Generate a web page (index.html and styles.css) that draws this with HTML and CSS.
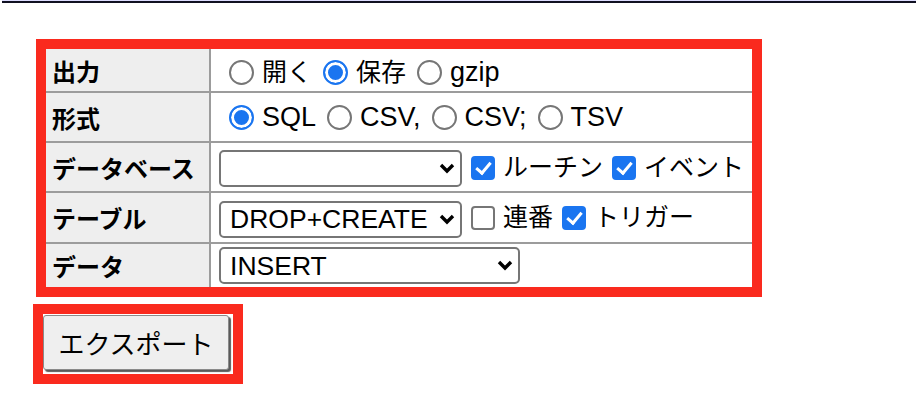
FILE: index.html
```html
<!DOCTYPE html>
<html lang="ja">
<head>
    <meta charset="UTF-8">
    <title>エクスポート</title>
    <link rel="stylesheet" href="styles.css">
</head>
<body>
    <div class="heading"></div>

    <form class="dump">
        <div class="mark">
            <table class="opts">
                <tr class="row1">
                    <th>出力</th>
                    <td>
                        <label><input type="radio" name="output" value="text">開く</label>
                        <label><input type="radio" name="output" value="file" checked>保存</label>
                        <label class="lat"><input type="radio" name="output" value="gz">gzip</label>
                    </td>
                </tr>
                <tr class="row2">
                    <th>形式</th>
                    <td>
                        <label class="lat"><input type="radio" name="format" value="sql" checked>SQL</label>
                        <label class="lat"><input type="radio" name="format" value="csv">CSV,</label>
                        <label class="lat"><input type="radio" name="format" value="csv;">CSV;</label>
                        <label class="lat"><input type="radio" name="format" value="tsv">TSV</label>
                    </td>
                </tr>
                <tr class="row3">
                    <th>データベース</th>
                    <td>
                        <span class="sel">
                            <select name="db_style">
                                <option></option>
                                <option>USE</option>
                                <option>DROP+CREATE</option>
                                <option>CREATE</option>
                            </select>
                            <svg class="chev" width="16" height="11" viewBox="0 0 16 11"><path d="M2 2 L8 8 L14 2" fill="none" stroke="#000" stroke-width="3.4"/></svg>
                        </span>
                        <label><input type="checkbox" name="routines" checked>ルーチン</label>
                        <label><input type="checkbox" name="events" checked>イベント</label>
                    </td>
                </tr>
                <tr class="row4">
                    <th>テーブル</th>
                    <td>
                        <span class="sel">
                            <select name="table_style">
                                <option></option>
                                <option>DROP+CREATE</option>
                                <option>CREATE</option>
                            </select>
                            <svg class="chev" width="16" height="11" viewBox="0 0 16 11"><path d="M2 2 L8 8 L14 2" fill="none" stroke="#000" stroke-width="3.4"/></svg>
                        </span>
                        <label><input type="checkbox" name="auto_increment">連番</label>
                        <label><input type="checkbox" name="triggers" checked>トリガー</label>
                    </td>
                </tr>
                <tr class="row5">
                    <th>データ</th>
                    <td>
                        <span class="sel">
                            <select name="data_style" class="long">
                                <option></option>
                                <option>TRUNCATE+INSERT</option>
                                <option>INSERT</option>
                                <option>INSERT+UPDATE</option>
                            </select>
                            <svg class="chev" width="16" height="11" viewBox="0 0 16 11"><path d="M2 2 L8 8 L14 2" fill="none" stroke="#000" stroke-width="3.4"/></svg>
                        </span>
                    </td>
                </tr>
            </table>
        </div>

        <div class="mark mark-btn">
            <button type="submit">エクスポート</button>
        </div>
    </form>

    <script>
        document.querySelector('select[name="table_style"]').selectedIndex = 1;
        document.querySelector('select[name="data_style"]').selectedIndex = 2;
    </script>
</body>
</html>
```

FILE: styles.css
```css
body {
    margin: 0;
    background: #fff;
    color: #000;
    font-family: "Liberation Sans", "Noto Sans CJK JP", sans-serif;
}
.heading {
    margin-left: 2px;
    height: 1px;
    background: #ddf;
    border-bottom: 2px solid #111122;
}
.dump {
    padding: 36px 0 0 36px;
}
.mark {
    display: inline-block;
    border: 10px solid #fa2a1e;
    vertical-align: top;
}
.opts {
    border-collapse: collapse;
    border-style: hidden;
    width: 706px;
    font-size: 25px;
}
.opts th, .opts td {
    border: 2px solid #9c9c9c;
    padding: 0 8px;
    vertical-align: middle;
    white-space: nowrap;
}
.opts th {
    width: 152px;
    padding-left: 6px;
    background: #eee;
    text-align: left;
    font-size: 24px;
}
.row1 th { height: 42px; }
.row2 th { height: 48px; }
.row3 th { height: 48px; }
.row4 th { height: 49px; }
.row5 th { height: 43px; }

label {
    white-space: nowrap;
}
label.lat {
    font-size: 27px;
}
input[type="radio"], input[type="checkbox"] {
    appearance: none;
    -webkit-appearance: none;
    box-sizing: border-box;
    width: 25px;
    height: 25px;
    margin: 0 8px 0 4px;
    vertical-align: -4px;
    border: 2px solid #767676;
    background: #fff;
    position: relative;
}
.opts td > label:first-child input {
    margin-left: 10px;
}
input[type="radio"] {
    border-radius: 50%;
}
input[type="radio"]:checked {
    border-color: #1a75f0;
    background: #1a75f0;
    box-shadow: inset 0 0 0 3px #fff;
}
input[type="checkbox"] {
    width: 24px;
    height: 24px;
    margin: 0 8px 0 2px;
    border-radius: 4px;
}
input[type="checkbox"]:checked {
    border-color: #1a75f0;
    background: #1a75f0;
}
input[type="checkbox"]:checked::after {
    content: "";
    position: absolute;
    left: 6px;
    top: 1px;
    width: 6px;
    height: 12px;
    border: solid #fff;
    border-width: 0 3px 3px 0;
    transform: rotate(40deg);
}

.sel {
    position: relative;
    display: inline-block;
    vertical-align: middle;
}
select {
    appearance: none;
    -webkit-appearance: none;
    width: 243px;
    height: 37px;
    padding: 0 28px 0 9px;
    border: 2px solid #767676;
    border-radius: 5px;
    background: #fff;
    color: #000;
    font-family: "Liberation Sans", "Noto Sans CJK JP", sans-serif;
    font-size: 26.5px;
}
select.long {
    width: 301px;
}
.chev {
    position: absolute;
    right: 7px;
    top: 13px;
    pointer-events: none;
}

.mark-btn {
    display: block;
    width: fit-content;
    margin: 7px 0 0 -3px;
    padding: 1px 4px 4px 0;
}
button {
    display: block;
    width: 186px;
    height: 55px;
    padding: 0;
    border: 1px solid #8a8a8a;
    border-radius: 3px;
    background: #efefef;
    box-shadow: 2px 2px 1px #5a5a5a;
    color: #000;
    font-family: "Liberation Sans", "Noto Sans CJK JP", sans-serif;
    font-size: 26px;
    cursor: pointer;
}
```
